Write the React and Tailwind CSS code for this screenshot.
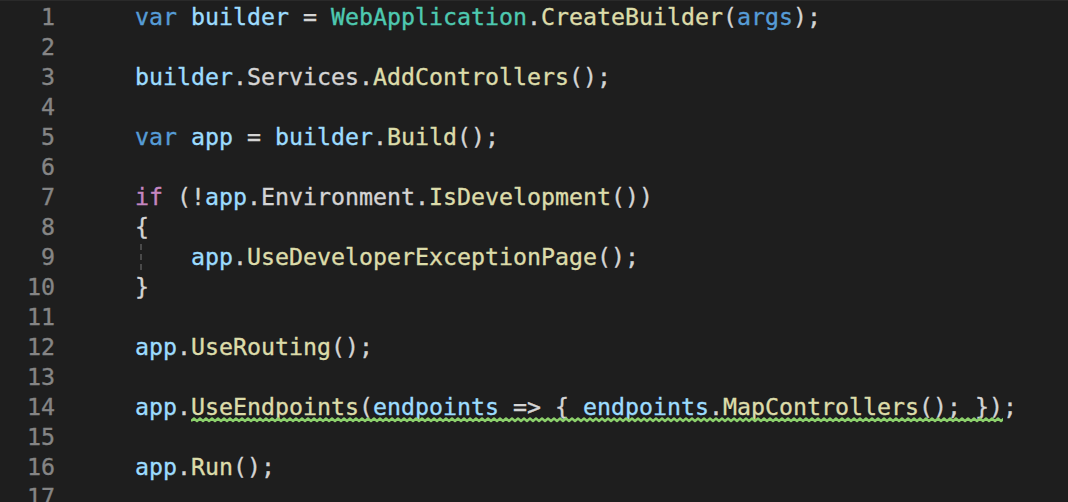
import React from "react";

const C = {
  kw: "text-[#569cd6]",
  v: "text-[#9cdcfe]",
  t: "text-[#4ec9b0]",
  f: "text-[#dcdcaa]",
  p: "text-[#d4d4d4]",
  c: "text-[#c586c0]",
};

function Wave({ width }) {
  const period = 6;
  let d = "M0 4";
  for (let x = 0; x < width; x += period) {
    d += ` L${x + period / 2} 1.5 L${x + period} 4`;
  }
  return (
    <svg
      className="absolute left-0 top-[25px] pointer-events-none"
      width={width}
      height="7"
      viewBox={`0 0 ${width} 7`}
    >
      <path d={d} fill="none" stroke="#8cd06c" strokeWidth="2.4" strokeLinejoin="round" />
    </svg>
  );
}

const lines = [
  [["var", "kw"], [" "], ["builder", "v"], [" = ", "p"], ["WebApplication", "t"], [".", "p"], ["CreateBuilder", "f"], ["(", "p"], ["args", "kw"], [");", "p"]],
  [],
  [["builder", "v"], [".", "p"], ["Services", "p"], [".", "p"], ["AddControllers", "f"], ["();", "p"]],
  [],
  [["var", "kw"], [" "], ["app", "v"], [" = ", "p"], ["builder", "v"], [".", "p"], ["Build", "f"], ["();", "p"]],
  [],
  [["if", "c"], [" (!", "p"], ["app", "v"], [".", "p"], ["Environment", "p"], [".", "p"], ["IsDevelopment", "f"], ["())", "p"]],
  [["{", "p"]],
  "guide",
  [["}", "p"]],
  [],
  [["app", "v"], [".", "p"], ["UseRouting", "f"], ["();", "p"]],
  [],
  "squiggle",
  [],
  [["app", "v"], [".", "p"], ["Run", "f"], ["();", "p"]],
  [],
];

function Tokens({ toks }) {
  return toks.map((t, i) => (
    <span key={i} className={t[1] ? C[t[1]] : ""}>
      {t[0]}
    </span>
  ));
}

export default function App() {
  return (
    <div
      className="w-[1068px] h-[502px] overflow-hidden bg-[#1e1e1e] border-t border-[#2a2a2a] pt-px [-webkit-text-stroke:0.35px]"
      style={{ fontFamily: '"DejaVu Sans Mono", monospace' }}
    >
      {lines.map((ln, i) => (
        <div key={i} className="flex h-[30px] leading-[30px] text-[23.25px] whitespace-pre">
          <div className="w-[55px] shrink-0 text-right text-[#858585]">{i + 1}</div>
          <div className="pl-[80px] flex">
            {ln === "guide" ? (
              <>
                <span className="relative">
                  {"    "}
                  <span className="absolute left-[5px] top-[2px] h-[26px] border-l-2 border-dashed border-[#4a4a4a]" />
                </span>
                <Tokens toks={[["app", "v"], [".", "p"], ["UseDeveloperExceptionPage", "f"], ["();", "p"]]} />
              </>
            ) : ln === "squiggle" ? (
              <>
                <Tokens toks={[["app", "v"], [".", "p"]]} />
                <span className="relative">
                  <Tokens
                    toks={[["UseEndpoints", "f"], ["(", "p"], ["endpoints", "v"], [" => { ", "p"], ["endpoints", "v"], [".", "p"], ["MapControllers", "f"], ["(); })", "p"]]}
                  />
                  <Wave width={812} />
                </span>
                <span className={C.p}>;</span>
              </>
            ) : (
              <Tokens toks={ln} />
            )}
          </div>
        </div>
      ))}
    </div>
  );
}
